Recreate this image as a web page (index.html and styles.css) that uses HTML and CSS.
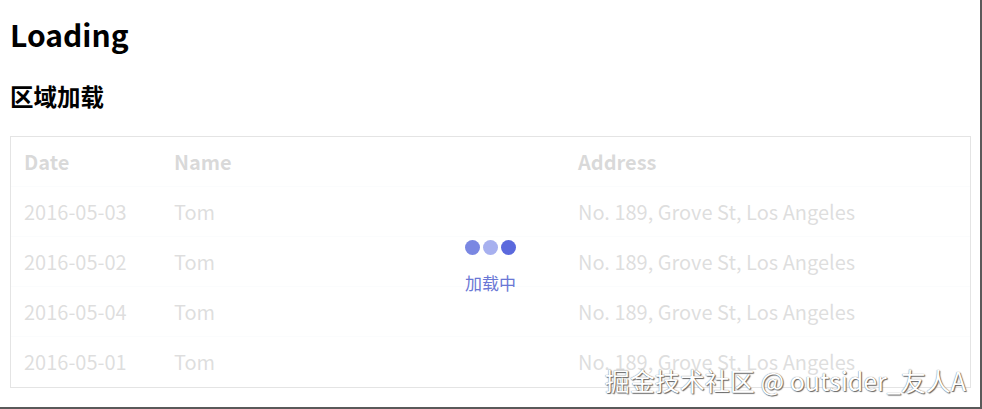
FILE: index.html
```html
<!DOCTYPE html>
<html lang="zh">
<head>
<meta charset="utf-8">
<link rel="stylesheet" href="styles.css">
</head>
<body>
<div class="page">
  <h1 class="title">Loading</h1>
  <h2 class="subtitle">区域加载</h2>
  <div class="table-wrap">
    <div class="grid">
      <div class="cell head">Date</div><div class="cell head">Name</div><div class="cell head">Address</div>
      <div class="cell">2016-05-03</div><div class="cell">Tom</div><div class="cell">No. 189, Grove St, Los Angeles</div>
      <div class="cell">2016-05-02</div><div class="cell">Tom</div><div class="cell">No. 189, Grove St, Los Angeles</div>
      <div class="cell">2016-05-04</div><div class="cell">Tom</div><div class="cell">No. 189, Grove St, Los Angeles</div>
      <div class="cell">2016-05-01</div><div class="cell">Tom</div><div class="cell">No. 189, Grove St, Los Angeles</div>
    </div>
    <div class="mask">
      <div class="spinner">
        <div class="dots"><span class="dot d1"></span><span class="dot d2"></span><span class="dot d3"></span></div>
        <div class="loading-text">加载中</div>
      </div>
    </div>
  </div>
  <div class="watermark">掘金技术社区 @ outsider_友人A</div>
</div>
</body>
</html>
```
FILE: styles.css
```css
html, body {
  margin: 0;
  padding: 0;
  background: #fff;
}
body {
  font-family: "Noto Sans CJK SC", "Noto Sans", sans-serif;
}
.page {
  position: relative;
  width: 970px;
  height: 397px;
  padding: 10px 0 0 10px;
  border-right: 2px solid #5a5a5a;
  border-bottom: 2px solid #5a5a5a;
  box-sizing: content-box;
}
.title {
  margin: 0;
  font-size: 30px;
  font-weight: 700;
  line-height: 48px;
  color: #000;
}
.subtitle {
  margin: 22px 0 0;
  font-size: 23.5px;
  font-weight: 700;
  line-height: 32px;
  color: #000;
}
.table-wrap {
  position: relative;
  margin-top: 24px;
  width: 959px;
  border: 1px solid #e4e4e4;
}
.grid {
  display: grid;
  grid-template-columns: 150px 404px 1fr;
}
.cell {
  height: 50px;
  line-height: 50px;
  padding-left: 13px;
  font-size: 20px;
  color: #6a6a6a;
  border-bottom: 1px solid #eef0f4;
  box-sizing: border-box;
  white-space: nowrap;
}
.grid .cell:nth-last-child(-n+3) {
  border-bottom: none;
}
.cell.head {
  font-weight: 700;
  color: #555;
}
.mask {
  position: absolute;
  inset: 0;
  background: rgba(255, 255, 255, 0.78);
  display: flex;
  align-items: center;
  justify-content: center;
}
.spinner {
  display: flex;
  flex-direction: column;
  align-items: center;
  margin-top: 11px;
}
.dots {
  display: flex;
  gap: 3px;
}
.dot {
  width: 15px;
  height: 15px;
  border-radius: 50%;
}
.d1 { background: #7a87e2; }
.d2 { background: #a7b0ef; }
.d3 { background: #5b69dd; }
.loading-text {
  margin-top: 16px;
  font-size: 17px;
  line-height: 24px;
  color: #6a77d5;
}
.watermark {
  position: absolute;
  right: 14px;
  bottom: 12px;
  font-family: "Noto Sans CJK SC", sans-serif;
  font-size: 25px;
  line-height: 30px;
  color: #fff;
  text-shadow: 0 0 1px #555, 1px 1px 1px #666;
}
```
